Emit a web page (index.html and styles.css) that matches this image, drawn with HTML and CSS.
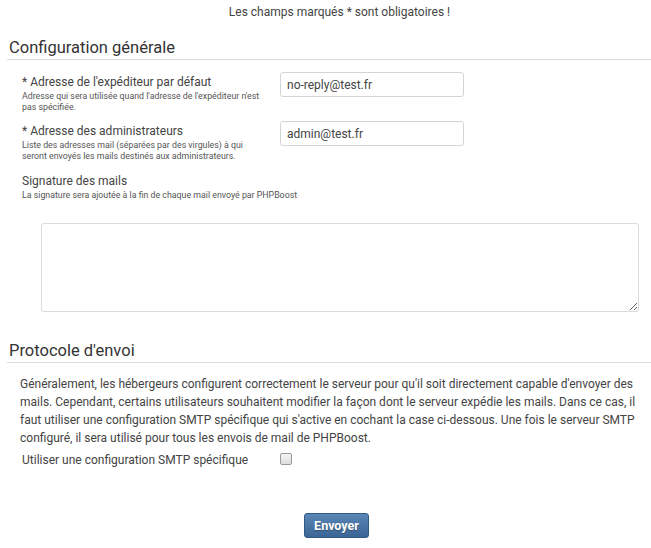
FILE: index.html
```html
<!DOCTYPE html>
<html lang="fr">
<head>
<meta charset="utf-8">
<title>Configuration des mails</title>
<link rel="stylesheet" href="styles.css">
</head>
<body>
<form class="page">
  <p class="notice">Les champs marqués * sont obligatoires !</p>

  <fieldset class="section">
    <h2 class="section-title">Configuration générale</h2>

    <div class="field">
      <div class="field-label">
        <span class="label-main">* Adresse de l'expéditeur par défaut</span>
        <span class="label-desc">Adresse qui sera utilisée quand l'adresse de l'expéditeur n'est pas spécifiée.</span>
      </div>
      <input class="text-input" type="text" value="no-reply@test.fr">
    </div>

    <div class="field">
      <div class="field-label">
        <span class="label-main">* Adresse des administrateurs</span>
        <span class="label-desc">Liste des adresses mail (séparées par des virgules) à qui seront envoyés les mails destinés aux administrateurs.</span>
      </div>
      <input class="text-input" type="text" value="admin@test.fr">
    </div>

    <div class="field-block">
      <div class="field-label wide">
        <span class="label-main">Signature des mails</span>
        <span class="label-desc">La signature sera ajoutée à la fin de chaque mail envoyé par PHPBoost</span>
      </div>
      <textarea class="textarea"></textarea>
    </div>
  </fieldset>

  <fieldset class="section">
    <h2 class="section-title">Protocole d'envoi</h2>
    <p class="explain">Généralement, les hébergeurs configurent correctement le serveur pour qu'il soit directement capable d'envoyer des mails. Cependant, certains utilisateurs souhaitent modifier la façon dont le serveur expédie les mails. Dans ce cas, il faut utiliser une configuration SMTP spécifique qui s'active en cochant la case ci-dessous. Une fois le serveur SMTP configuré, il sera utilisé pour tous les envois de mail de PHPBoost.</p>
    <div class="check-field">
      <div class="check-label">
        <span class="label-main">Utiliser une configuration SMTP spécifique</span>
      </div>
      <span class="checkbox"></span>
    </div>
  </fieldset>

  <div class="actions">
    <button type="button" class="submit">Envoyer</button>
  </div>
</form>
</body>
</html>
```

FILE: styles.css
```css
html, body {
  margin: 0;
  padding: 0;
  background: #ffffff;
}

body {
  font-family: Roboto, "Liberation Sans", sans-serif;
  color: #444;
  font-size: 12px;
  width: 651px;
}

.page {
  display: flex;
  flex-direction: column;
}

.notice {
  margin: 5px 0 0 0;
  text-align: center;
  font-size: 12px;
  line-height: 15px;
  color: #444;
  padding-left: 28px;
}

.section {
  border: 0;
  margin: 0;
  padding: 0;
  min-width: 0;
}

.section-title {
  margin: 0 0 0 7px;
  padding: 0 0 1px 2px;
  font-weight: normal;
  font-size: 16.5px;
  line-height: 20px;
  color: #333;
  border-bottom: 1px solid #dcdcdc;
}

.section:first-of-type .section-title {
  margin-top: 18px;
}

.field {
  display: grid;
  grid-template-columns: 258px 184px;
  align-items: start;
  padding-left: 22px;
}

.field:first-of-type {
  margin-top: 12px;
}

.field + .field {
  margin-top: 8px;
}

.field-label {
  display: flex;
  flex-direction: column;
  padding-top: 3px;
}

.field-block .field-label {
  padding-top: 0;
}

.label-main {
  font-size: 12px;
  line-height: 15px;
  color: #444;
}

.label-desc {
  font-size: 8.8px;
  line-height: 11px;
  color: #555;
  padding-right: 12px;
  margin-top: 1px;
}

.text-input {
  box-sizing: border-box;
  width: 184px;
  height: 25px;
  margin: 0;
  border: 1px solid #d4d4d4;
  border-radius: 3px;
  padding: 0 6px;
  font-family: Roboto, "Liberation Sans", sans-serif;
  font-size: 12px;
  color: #444;
  background: #fff;
}

.field-block {
  margin-top: 12px;
  padding-left: 22px;
  display: flex;
  flex-direction: column;
}

.textarea {
  box-sizing: border-box;
  margin: 22px 0 0 19px;
  width: 598px;
  height: 89px;
  border: 1px solid #dadada;
  border-radius: 3px;
  background: #fff;
  font-family: Roboto, "Liberation Sans", sans-serif;
}

.section + .section .section-title {
  margin-top: 29px;
}

.explain {
  margin: 12px 12px 0 20px;
  font-size: 12px;
  line-height: 18px;
  color: #444;
}

.check-field {
  display: grid;
  grid-template-columns: 258px 12px;
  align-items: start;
  padding-left: 22px;
  margin-top: 4px;
}

.check-label {
  padding-top: 2px;
}

.checkbox {
  display: block;
  box-sizing: border-box;
  width: 12px;
  height: 12px;
  margin-top: 2px;
  border: 1px solid #9a9a9a;
  border-radius: 2px;
  background: linear-gradient(#f4f4f4, #dedede);
}

.actions {
  display: flex;
  justify-content: center;
  padding-left: 22px;
  margin-top: 45px;
}

.submit {
  width: 65px;
  height: 25px;
  margin: 0;
  padding: 0;
  border: 1px solid #2f5a86;
  border-radius: 3px;
  background: linear-gradient(#5a86b6, #3a6595);
  color: #fff;
  font-family: Roboto, "Liberation Sans", sans-serif;
  font-size: 12.5px;
  font-weight: bold;
  text-shadow: 0 1px 1px rgba(0,0,0,0.3);
}
```
